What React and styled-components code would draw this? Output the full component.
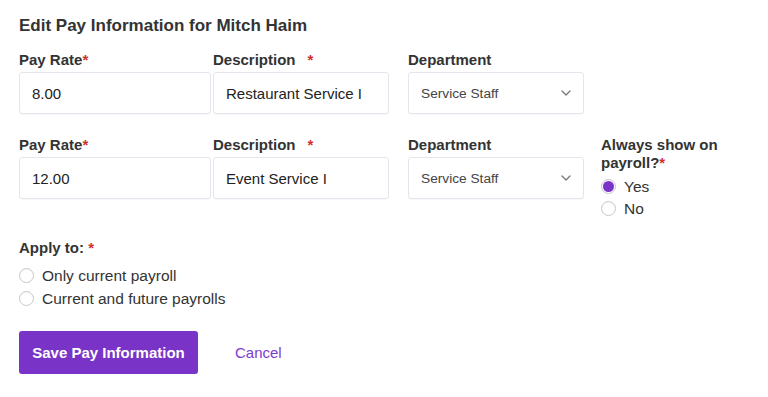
import React from "react";
import styled, { createGlobalStyle } from "styled-components";

const Global = createGlobalStyle`
  html, body { margin: 0; padding: 0; background: #fff; }
  body { font-family: "Liberation Sans", Arial, sans-serif; color: #333; }
  * { box-sizing: border-box; }
`;

const Page = styled.div`
  padding: 16px 19px 0;
`;

const Title = styled.h2`
  margin: 0 0 15px;
  font-size: 17px;
  line-height: 20px;
  font-weight: 700;
  color: #333;
`;

const Row = styled.div`
  display: grid;
  grid-template-columns: 194px 195px 193px 150px;
  align-items: start;
  margin-bottom: ${(p) => p.$mb || 0}px;
`;

const Field = styled.div`
  display: flex;
  flex-direction: column;
`;

const Label = styled.label`
  font-size: 15px;
  line-height: ${(p) => p.$lh || 17}px;
  font-weight: 700;
  color: #333;
  margin-bottom: ${(p) => (p.$mb != null ? p.$mb : 4)}px;
`;

const Req = styled.span`
  color: #d0312d;
  margin-left: ${(p) => p.$gap || 0}px;
`;

const Input = styled.div`
  width: ${(p) => p.$w}px;
  height: 42px;
  border: 1px solid #e3e6ec;
  border-radius: 3px;
  box-shadow: 0 1px 1px rgba(0, 0, 0, 0.03);
  display: flex;
  align-items: center;
  padding: 0 12px;
  font-size: 15px;
  color: #222;
`;

const Select = styled(Input)`
  justify-content: space-between;
  font-size: 13.7px;
  color: #444;
  padding: 0 12px;
`;

const Chevron = () => (
  <svg width="10" height="6" viewBox="0 0 10 6" fill="none">
    <path d="M1 1l4 4 4-4" stroke="#777" strokeWidth="1.3" strokeLinecap="round" strokeLinejoin="round" />
  </svg>
);

const RadioList = styled.div`
  display: flex;
  flex-direction: column;
  gap: ${(p) => p.$gap || 8}px;
`;

const RadioRow = styled.label`
  display: flex;
  align-items: center;
  gap: 8px;
  height: 15px;
  font-size: 15.5px;
  line-height: 15px;
  color: #333;
`;

const Circle = styled.span`
  flex: none;
  width: 15px;
  height: 15px;
  border-radius: 50%;
  border: 1px solid ${(p) => (p.$on ? "#c9c3d6" : "#c8c8c8")};
  background: #fff;
  display: flex;
  align-items: center;
  justify-content: center;
  box-shadow: inset 0 1px 1px rgba(0, 0, 0, 0.04);
  &::after {
    content: "";
    width: 11px;
    height: 11px;
    border-radius: 50%;
    background: ${(p) => (p.$on ? "#7b33c8" : "transparent")};
  }
`;

const Apply = styled.div`
  display: flex;
  flex-direction: column;
  margin-bottom: 25px;
`;

const Actions = styled.div`
  display: flex;
  align-items: center;
  gap: 37px;
`;

const Button = styled.button`
  height: 43px;
  width: 179px;
  border: none;
  border-radius: 3px;
  background: #7a33c7;
  color: #fff;
  font-family: inherit;
  font-size: 15px;
  font-weight: 700;
  padding: 0;
`;

const LinkBtn = styled.a`
  color: #7d3bcd;
  font-size: 15px;
  text-decoration: none;
`;

const Radio = ({ on, children }) => (
  <RadioRow>
    <Circle $on={on} />
    {children}
  </RadioRow>
);

const PayRow = ({ rate, desc, extra, mb }) => (
  <Row $mb={mb}>
    <Field>
      <Label>
        Pay Rate<Req>*</Req>
      </Label>
      <Input $w={192}>{rate}</Input>
    </Field>
    <Field>
      <Label>
        Description<Req $gap={12}>*</Req>
      </Label>
      <Input $w={176}>{desc}</Input>
    </Field>
    <Field>
      <Label>Department</Label>
      <Select $w={176}>
        Service Staff
        <Chevron />
      </Select>
    </Field>
    {extra}
  </Row>
);

export default function App() {
  return (
    <>
      <Global />
      <Page>
        <Title>Edit Pay Information for Mitch Haim</Title>
        <PayRow rate="8.00" desc="Restaurant Service I" mb={22} />
        <PayRow
          rate="12.00"
          desc="Event Service I"
          mb={23}
          extra={
            <Field>
              <Label $lh={18} $mb={7}>
                Always show on payroll?<Req>*</Req>
              </Label>
              <RadioList $gap={7}>
                <Radio on>Yes</Radio>
                <Radio>No</Radio>
              </RadioList>
            </Field>
          }
        />
        <Apply>
          <Label $mb={12}>
            Apply to: <Req>*</Req>
          </Label>
          <RadioList $gap={8}>
            <Radio>Only current payroll</Radio>
            <Radio>Current and future payrolls</Radio>
          </RadioList>
        </Apply>
        <Actions>
          <Button>Save Pay Information</Button>
          <LinkBtn href="#">Cancel</LinkBtn>
        </Actions>
      </Page>
    </>
  );
}
